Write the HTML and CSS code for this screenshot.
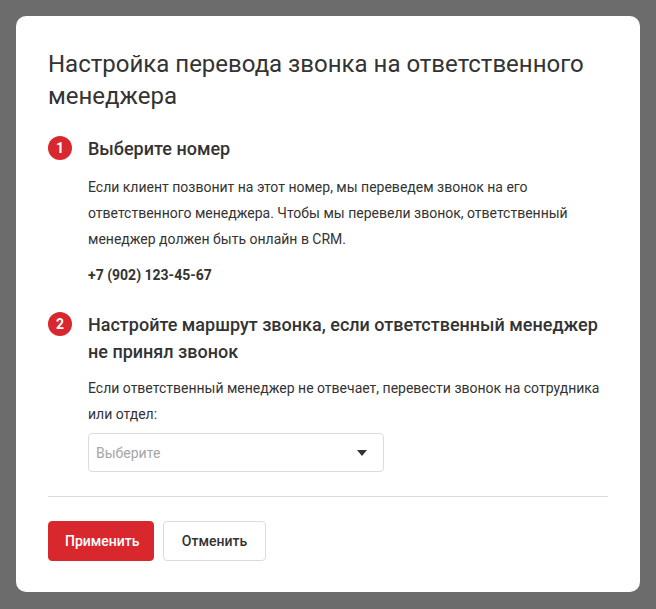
FILE: index.html
```html
<!DOCTYPE html>
<html lang="ru">
<head>
<meta charset="utf-8">
<link rel="stylesheet" href="styles.css">
</head>
<body>
<div class="modal">
  <h1 class="title">Настройка перевода звонка на ответственного менеджера</h1>

  <section class="step">
    <div class="step-head">
      <span class="num">1</span>
      <h2 class="step-title">Выберите номер</h2>
    </div>
    <div class="step-body">
      <p class="text">Если клиент позвонит на этот номер, мы переведем звонок на его ответственного менеджера. Чтобы мы перевели звонок, ответственный менеджер должен быть онлайн в CRM.</p>
      <p class="phone">+7 (902) 123-45-67</p>
    </div>
  </section>

  <section class="step">
    <div class="step-head">
      <span class="num">2</span>
      <h2 class="step-title">Настройте маршрут звонка, если ответственный менеджер не принял звонок</h2>
    </div>
    <div class="step-body">
      <p class="text">Если ответственный менеджер не отвечает, перевести звонок на сотрудника или отдел:</p>
      <div class="select">
        <span class="placeholder">Выберите</span>
        <svg class="caret" width="10" height="6" viewBox="0 0 10 6"><path d="M0 0H10L5 6Z" fill="#333"/></svg>
      </div>
    </div>
  </section>

  <hr class="divider">

  <div class="actions">
    <button class="btn btn-primary">Применить</button>
    <button class="btn btn-secondary">Отменить</button>
  </div>
</div>
</body>
</html>
```
FILE: styles.css
```css
* { box-sizing: border-box; }
html, body { margin: 0; padding: 0; }
body {
  background: #6b6c6b;
  font-family: Roboto, "Noto Sans", sans-serif;
  color: #333;
  padding: 16px;
}
.modal {
  width: 624px;
  height: 576px;
  background: #fff;
  border-radius: 10px;
  padding: 32px 32px 31px;
}
.title {
  margin: 0;
  font-size: 24px;
  font-weight: 400;
  line-height: 32px;
  color: #333;
}
.step { margin-top: 23px; }
.step-head {
  display: flex;
  align-items: flex-start;
}
.num {
  flex: none;
  width: 24px;
  height: 24px;
  margin-top: 1px;
  border-radius: 50%;
  background: #d9272e;
  color: #fff;
  font-size: 14px;
  font-weight: 700;
  line-height: 24px;
  text-align: center;
}
.step-title {
  margin: 0 0 0 16px;
  font-size: 18px;
  font-weight: 500;
  line-height: 27px;
  color: #333;
}
.step-body { padding-left: 40px; }
.text {
  margin: 12px 0 0;
  font-size: 14px;
  line-height: 26px;
  color: #333;
}
.step:nth-of-type(2) .text { margin-top: 10px; }
.phone {
  margin: 10px 0 0;
  font-size: 14px;
  font-weight: 700;
  line-height: 26px;
}
.select {
  margin-top: 6px;
  width: 296px;
  height: 39px;
  border: 1px solid #dcdcdc;
  border-radius: 4px;
  display: flex;
  align-items: center;
  justify-content: space-between;
  padding: 0 16px 0 7px;
}
.placeholder {
  font-size: 14px;
  color: #a6a6a6;
}
.caret { display: block; }
.divider {
  margin: 24px 0 0;
  border: 0;
  border-top: 1px solid #dcdcdc;
}
.actions {
  margin-top: 24px;
  display: flex;
  gap: 9px;
}
.btn {
  height: 40px;
  border-radius: 4px;
  font-family: Roboto, "Noto Sans", sans-serif;
  font-size: 14px;
  font-weight: 500;
  padding: 0 16px;
  cursor: pointer;
}
.btn-primary {
  background: #d9272e;
  color: #fff;
  border: 1px solid #d9272e;
  width: 106px;
}
.btn-secondary {
  background: #fff;
  color: #333;
  border: 1px solid #dcdcdc;
  width: 103px;
}
```
